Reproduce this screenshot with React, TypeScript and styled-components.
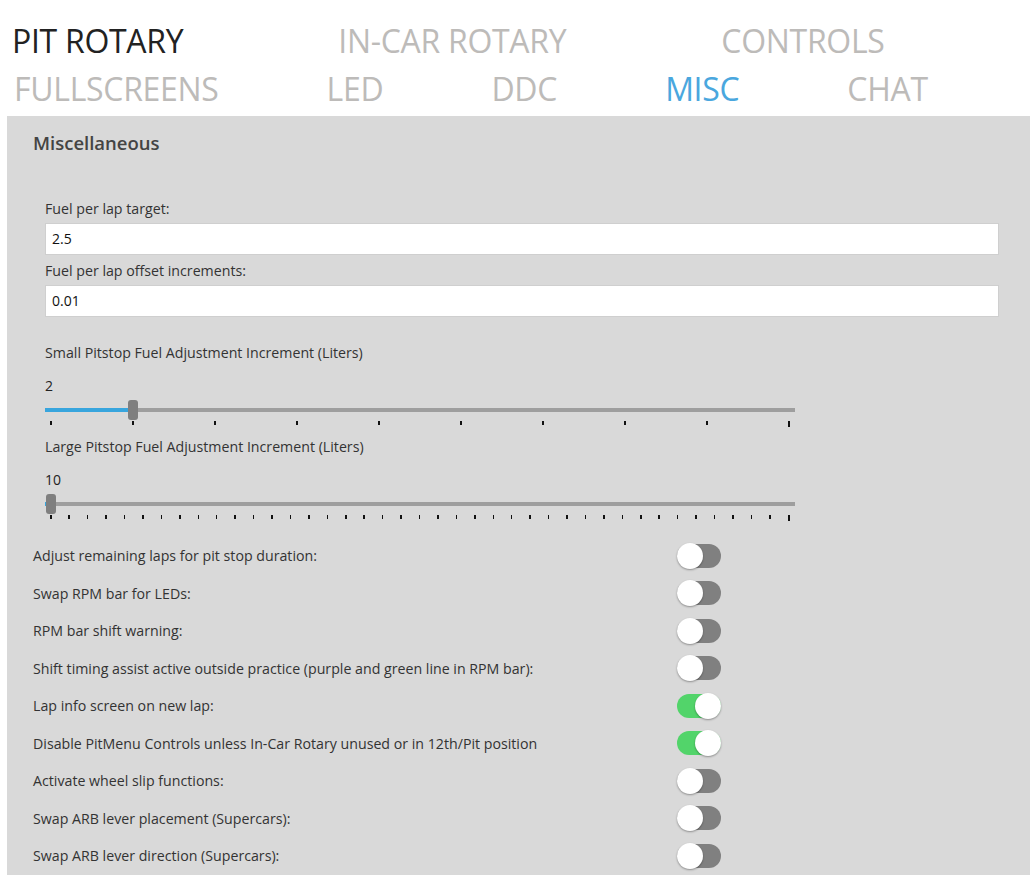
import React from "react";
import styled, { createGlobalStyle } from "styled-components";

const Global = createGlobalStyle`
  html, body { margin: 0; padding: 0; background: #fff; }
  body { font-family: "Open Sans", "Noto Sans", sans-serif; }
  * { box-sizing: border-box; }
`;

const Page = styled.div`
  width: 1030px;
  height: 875px;
  overflow: hidden;
  background: #fff;
`;

const TabRow = styled.div<{ $gap: number; $pad: number }>`
  display: flex;
  gap: ${(p) => p.$gap}px;
  padding-left: ${(p) => p.$pad}px;
  height: 48px;
  align-items: center;
`;

const Tab = styled.div<{ $state: "active" | "current" | "idle" }>`
  font-size: 32px;
  font-weight: 400;
  letter-spacing: -0.3px;
  line-height: 48px;
  white-space: nowrap;
  color: ${(p) =>
    p.$state === "active" ? "#222" : p.$state === "current" ? "#4aa7de" : "#bdbbb9"};
`;

const Header = styled.div`
  padding-top: 17px;
  height: 116px;
`;

const Panel = styled.div`
  margin-left: 7px;
  background: #d9d9d9;
  height: 759px;
  padding: 14px 31px 0 26px;
`;

const Title = styled.div`
  font-size: 18.5px;
  font-weight: 600;
  color: #444;
  height: 26px;
  line-height: 26px;
`;

const Fields = styled.div`
  padding-left: 12px;
  margin-top: 43px;
  display: flex;
  flex-direction: column;
`;

const Label = styled.div`
  font-size: 14.2px;
  color: #333;
  line-height: 20px;
  height: 20px;
  white-space: nowrap;
`;

const Input = styled.div`
  margin-top: 4px;
  margin-bottom: 6px;
  height: 32px;
  background: #fff;
  border: 1px solid #cfcfcf;
  padding-left: 6px;
  font-size: 14px;
  line-height: 29px;
  color: #111;
`;

const SliderBlock = styled.div<{ $top: number }>`
  margin-top: ${(p) => p.$top}px;
  width: 750px;
`;

const Value = styled.div`
  font-size: 14px;
  color: #222;
  margin-top: 14px;
  line-height: 18px;
  height: 18px;
`;

const TrackWrap = styled.div`
  position: relative;
  margin-top: 5px;
  height: 20px;
  display: flex;
  align-items: center;
`;

const Track = styled.div`
  width: 100%;
  height: 4px;
  background: #9e9e9e;
  position: relative;
`;

const Fill = styled.div`
  position: absolute;
  left: 0;
  top: 0;
  height: 4px;
  background: #38a5dd;
`;

const Thumb = styled.div`
  position: absolute;
  top: 0;
  width: 10px;
  height: 20px;
  border-radius: 3px;
  background: #7f7f7f;
`;

const Ticks = styled.div`
  display: flex;
  justify-content: space-between;
  padding: 0 5px 0 5px;
  height: 7px;
`;

const Tick = styled.div<{ $last?: boolean }>`
  width: ${(p) => (p.$last ? 2 : 1.5)}px;
  height: ${(p) => (p.$last ? 6 : 4)}px;
  margin-top: 1px;
  background: #111;
`;

const Toggles = styled.div`
  margin-top: 16px;
  display: flex;
  flex-direction: column;
`;

const ToggleRow = styled.div`
  display: grid;
  grid-template-columns: 644px 44px;
  align-items: center;
  height: 37.5px;
`;

const RowLabel = styled.div`
  font-size: 14.2px;
  color: #333;
  white-space: nowrap;
`;

const Switch = styled.div<{ $on: boolean }>`
  position: relative;
  width: 44px;
  height: 24px;
  border-radius: 12px;
  background: ${(p) => (p.$on ? "#52d46a" : "#808080")};
`;

const Knob = styled.div<{ $on: boolean }>`
  position: absolute;
  top: -1px;
  left: ${(p) => (p.$on ? "18px" : "0px")};
  width: 26px;
  height: 26px;
  border-radius: 50%;
  background: #fff;
  box-shadow: 0 1px 2px rgba(0, 0, 0, 0.35);
`;

function Slider({ label, value, min, max, top }: { label: string; value: number; min: number; max: number; top: number }) {
  const n = max - min + 1;
  const frac = (value - min) / (max - min);
  const center = 6 + frac * 738;
  return (
    <SliderBlock $top={top}>
      <Label>{label}</Label>
      <Value>{value}</Value>
      <TrackWrap>
        <Track>
          <Fill style={{ width: center - 5 }} />
        </Track>
        <Thumb style={{ left: center - 5 }} />
      </TrackWrap>
      <Ticks>
        {Array.from({ length: n }).map((_, i) => (
          <Tick key={i} $last={i === n - 1} />
        ))}
      </Ticks>
    </SliderBlock>
  );
}

const toggles: [string, boolean][] = [
  ["Adjust remaining laps for pit stop duration:", false],
  ["Swap RPM bar for LEDs:", false],
  ["RPM bar shift warning:", false],
  ["Shift timing assist active outside practice (purple and green line in RPM bar):", false],
  ["Lap info screen on new lap:", true],
  ["Disable PitMenu Controls unless In-Car Rotary unused or in 12th/Pit position", true],
  ["Activate wheel slip functions:", false],
  ["Swap ARB lever placement (Supercars):", false],
  ["Swap ARB lever direction (Supercars):", false],
];

export default function App() {
  return (
    <Page>
      <Global />
      <Header>
        <TabRow $gap={155} $pad={12}>
          <Tab $state="active">PIT ROTARY</Tab>
          <Tab $state="idle">IN-CAR ROTARY</Tab>
          <Tab $state="idle">CONTROLS</Tab>
        </TabRow>
        <TabRow $gap={108} $pad={14}>
          <Tab $state="idle">FULLSCREENS</Tab>
          <Tab $state="idle">LED</Tab>
          <Tab $state="idle">DDC</Tab>
          <Tab $state="current">MISC</Tab>
          <Tab $state="idle">CHAT</Tab>
        </TabRow>
      </Header>
      <Panel>
        <Title>Miscellaneous</Title>
        <Fields>
          <Label>Fuel per lap target:</Label>
          <Input>2.5</Input>
          <Label>Fuel per lap offset increments:</Label>
          <Input>0.01</Input>
          <Slider top={20} label="Small Pitstop Fuel Adjustment Increment (Liters)" value={2} min={1} max={10} />
          <Slider top={10} label="Large Pitstop Fuel Adjustment Increment (Liters)" value={10} min={10} max={50} />
        </Fields>
        <Toggles>
          {toggles.map(([t, on]) => (
            <ToggleRow key={t}>
              <RowLabel>{t}</RowLabel>
              <Switch $on={on}>
                <Knob $on={on} />
              </Switch>
            </ToggleRow>
          ))}
        </Toggles>
      </Panel>
    </Page>
  );
}
